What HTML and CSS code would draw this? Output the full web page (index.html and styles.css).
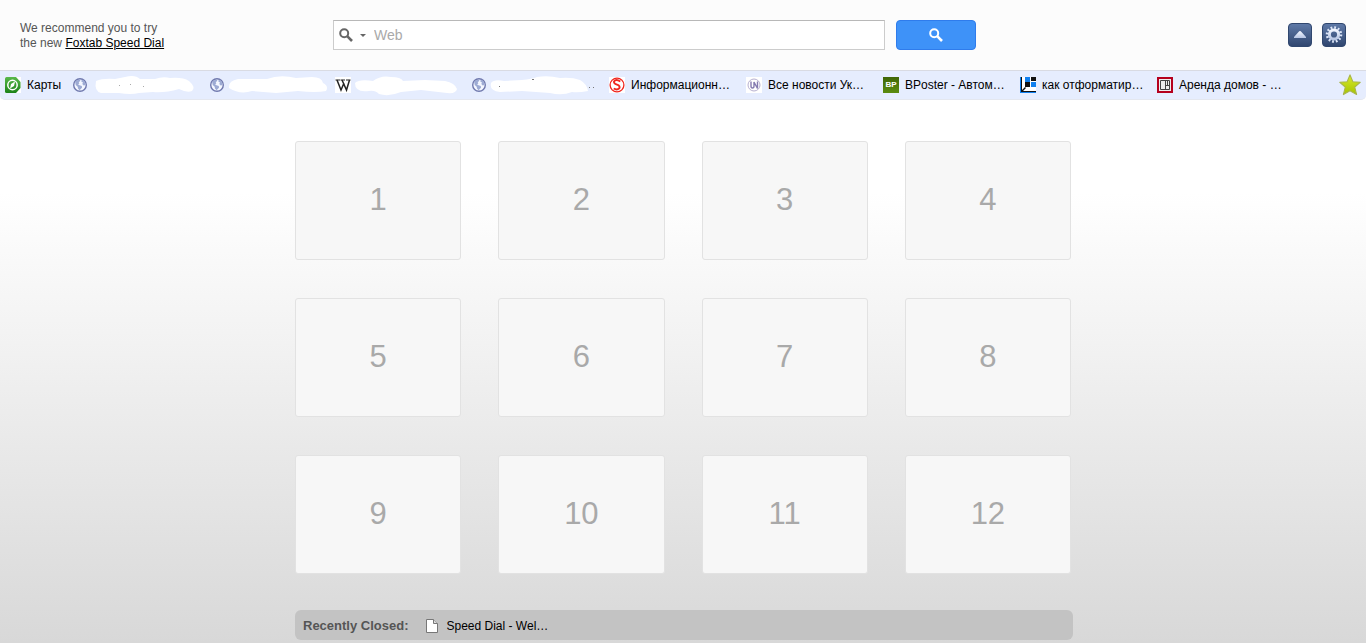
FILE: index.html
```html
<!DOCTYPE html>
<html lang="en">
<head>
<meta charset="utf-8">
<title>Speed Dial</title>
<link rel="stylesheet" href="styles.css">
</head>
<body>
<svg class="defs" aria-hidden="true">
  <defs>
    <linearGradient id="navy" x1="0" y1="0" x2="0" y2="1"><stop offset="0" stop-color="#5f7aa8"/><stop offset="1" stop-color="#2f456e"/></linearGradient>
    <linearGradient id="silver" x1="0" y1="0" x2="0" y2="1"><stop offset="0" stop-color="#f2f6ff"/><stop offset="1" stop-color="#b6c5e4"/></linearGradient>
    <linearGradient id="lime" x1="0" y1="0" x2="0" y2="1"><stop offset="0" stop-color="#d9ea2a"/><stop offset="1" stop-color="#a6c400"/></linearGradient>
    <linearGradient id="green" x1="0" y1="0" x2="0" y2="1"><stop offset="0" stop-color="#58b84a"/><stop offset="1" stop-color="#1c8218"/></linearGradient>
    <linearGradient id="olive" x1="0" y1="0" x2="0" y2="1"><stop offset="0" stop-color="#3f6606"/><stop offset="1" stop-color="#5c8c10"/></linearGradient>
    <symbol id="globe" viewBox="0 0 16 16">
      <circle cx="7" cy="8" r="6.300" fill="#f4f7ff" stroke="#7079ae" stroke-width="1.400"/>
      <path d="M2.200 5 4 3.200 7.500 2.300 7 4.200 5.700 5l.6 1.500-1.300.8 1.500 1 2.300.8.2 1.700-1.600 1.500-.6 1.300-1.800-2.200-.3-1.700-2-1.600zM8.800 2.500l2.700 1.700 1.100 3-1.600 1.600L9.300 7l.7-1.400-1.700-1.100z" fill="#9dabd4"/>
    </symbol>
    <symbol id="lens" viewBox="0 0 14 14">
      <circle cx="5.200" cy="5.200" r="4" fill="none" stroke="currentColor" stroke-width="2"/>
      <path d="m8.200 8.200 4.800 4.800" stroke="currentColor" stroke-width="2.600"/>
    </symbol>
  </defs>
</svg>

<header class="header">
  <p class="promo">We recommend you to try<br>the new <a class="promo-link" href="#">Foxtab Speed Dial</a></p>
  <form class="search">
    <div class="search-box">
      <button class="engine" type="button" aria-label="Choose search engine">
        <svg class="engine-lens"><use href="#lens"/></svg>
        <svg class="engine-arrow" viewBox="0 0 6 3"><path d="M0 0h6L3 3z" fill="#666"/></svg>
      </button>
      <input class="search-input" type="text" placeholder="Web" aria-label="Search the web">
    </div>
    <button class="search-button" type="submit" aria-label="Search"><svg class="search-lens"><use href="#lens"/></svg></button>
  </form>
  <div class="actions">
    <button class="action" type="button" aria-label="Collapse">
      <svg class="action-icon" viewBox="0 0 24 24"><rect x=".5" y=".5" width="23" height="23" rx="3.500" fill="url(#navy)" stroke="#30476f"/><path d="M6 15V14L10.500 9Q12 7.200 13.500 9L18 14V15Z" fill="url(#silver)"/></svg>
    </button>
    <button class="action" type="button" aria-label="Settings">
      <svg class="action-icon" viewBox="0 0 24 24"><rect x=".5" y=".5" width="23" height="23" rx="3.500" fill="url(#navy)" stroke="#30476f"/><circle cx="12" cy="11.500" r="7" fill="none" stroke="#dce5f7" stroke-width="2.600" stroke-dasharray="1.800 1.865"/><circle cx="12" cy="11.500" r="4.600" fill="none" stroke="url(#silver)" stroke-width="3"/></svg>
    </button>
  </div>
</header>

<nav class="bookmarks" aria-label="Bookmarks">
  <a class="bookmark bookmark-short" href="#">
    <svg class="favicon" viewBox="0 0 16 16"><path fill="#fff" d="M0 0h16v16H0z"/><path d="M1.500 0H11l4.500 5v6L11 16H1.500Q0 16 0 14.500v-13Q0 0 1.500 0z" fill="url(#green)"/><circle cx="7.500" cy="8" r="4.700" fill="none" stroke="#fff" stroke-width="1.500"/><path d="M10 4.500 9 9 5 11.500 6 7z" fill="#fff"/></svg>
    <span class="bookmark-title">Карты</span>
  </a>
  <a class="bookmark" href="#" aria-label="Bookmark">
    <svg class="favicon"><use href="#globe"/></svg>
    <svg class="smudge" viewBox="0 0 105 24"><path d="M1 8Q8 5 20 6L30 4Q40 1 45 6L60 6Q68 3 75 5Q88 4 94 8Q101 14 97 18Q92 20 84 16Q70 20 58 19L44 20Q36 22 24 20L6 20Q-1 18 1 8Z" fill="#fff"/><path d="M24 12h1v1h-1zM35 11h1v1h-1zM48 13h1v1h-1z" fill="#aaa"/></svg>
  </a>
  <a class="bookmark bookmark-narrow" href="#" aria-label="Bookmark">
    <svg class="favicon"><use href="#globe"/></svg>
    <svg class="smudge" viewBox="0 0 105 24"><path d="M-3 15Q-4 8 6 6L35 6Q48 1 64 5L80 4Q90 4 91 10Q97 13 94 18Q84 20 66 18L44 20L20 18Q8 22 -3 15Z" fill="#fff"/></svg>
  </a>
  <a class="bookmark" href="#" aria-label="Bookmark">
    <svg class="favicon" viewBox="0 0 16 16"><path d="M0 0h16v16H0z" fill="#fff"/><path d="M.5 3h5M6 3h4M11 3h4.500" stroke="#222"/><path d="m2 3 4 10L9 6M7 3l4.500 10L14.500 3" fill="none" stroke="#222" stroke-width="1.500"/></svg>
    <svg class="smudge" viewBox="0 0 105 24"><path d="M-2 10Q2 6 16 8Q24 2 34 4Q44 4 46 8L68 7L88 8Q98 10 100 16Q99 21 90 20L64 17L44 19Q32 24 22 21Q18 17 12 18Q-2 20 -2 10Z" fill="#fff"/></svg>
  </a>
  <a class="bookmark" href="#" aria-label="Bookmark">
    <svg class="favicon"><use href="#globe"/></svg>
    <svg class="smudge" viewBox="0 0 105 24"><path d="M-3 10Q0 6 10 8L28 7Q38 6 43 4Q54 2 66 5Q78 4 86 7Q93 11 94 18Q84 20 78 19Q68 23 56 20L28 18L6 19Q-5 18 -3 10Z" fill="#fff"/><path d="M5 13h1v1H5zM38 6h2v1h-2zM95 14h1v1h-1zM99 14h1v1h-1z" fill="#777"/></svg>
  </a>
  <a class="bookmark" href="#">
    <svg class="favicon" viewBox="0 0 16 16"><path d="M0 0h16v16H0z" fill="#fff"/><circle cx="8" cy="8" r="6.900" fill="#fff" stroke="#f0271f" stroke-width="1.300"/><path d="M11.300 4.500Q7 1.500 5 4.500Q4.600 6.600 8 7.700Q11.600 9 10.300 11.300Q8 13.500 4.700 11.500" fill="none" stroke="#f0271f" stroke-width="1.900"/></svg>
    <span class="bookmark-title">Информационн…</span>
  </a>
  <a class="bookmark" href="#">
    <svg class="favicon" viewBox="0 0 16 16"><path d="M0 0h16v16H0z" fill="#fff"/><circle cx="8" cy="8" r="6" fill="none" stroke="#b7b0d0"/><path d="M5 4.500V9q0 2 1.500 2T8 9V5l3.500 6.500v-7" fill="none" stroke="#857bb0" stroke-width="1.400"/></svg>
    <span class="bookmark-title">Все новости Ук…</span>
  </a>
  <a class="bookmark" href="#">
    <svg class="favicon" viewBox="0 0 16 16"><path d="M0 0h16v16H0z" fill="url(#olive)"/><text class="favicon-letters" x="8" y="10" text-anchor="middle">BP</text></svg>
    <span class="bookmark-title">BPoster - Автом…</span>
  </a>
  <a class="bookmark" href="#">
    <svg class="favicon" viewBox="0 0 16 16"><path d="M2 0h14v14H2z" fill="#fff"/><path d="M5 0h5v5H5zM11 5h5v5h-5z" fill="#1180ee"/><path d="M11 0h5v4h-5zM5 5h5v5H5z" fill="#111"/><path d="M0 0h1v15h15v1H0z" fill="#1180ee"/><path d="M1 0h1v13l3-3 1 1-3 3h13v1H1z" fill="#111"/></svg>
    <span class="bookmark-title">как отформатир…</span>
  </a>
  <a class="bookmark" href="#">
    <svg class="favicon" viewBox="0 0 16 16"><path d="M0 0h16v16H0z" fill="#b5001d"/><path d="M2 2h12v12H2z" fill="#eee"/><path d="M3.500 3.500h9v9h-9zM8.500 3.500v9M8.500 8.500h4M10.500 3.500v5" fill="none" stroke="#444"/></svg>
    <span class="bookmark-title">Аренда домов - …</span>
  </a>
  <button class="star" type="button" aria-label="Favourites">
    <svg class="star-icon" viewBox="0 0 20 20"><path d="m10 .8 2.600 6.200 6.700.5-5 4.500 1.700 6.700-6-3.500-6 3.500 1.700-6.700-5-4.500 6.700-.5z" fill="url(#lime)" stroke="#a9b64a" stroke-linejoin="round"/></svg>
  </button>
</nav>

<main class="main">
  <div class="dials">
    <button class="dial" type="button">1</button>
    <button class="dial" type="button">2</button>
    <button class="dial" type="button">3</button>
    <button class="dial" type="button">4</button>
    <button class="dial" type="button">5</button>
    <button class="dial" type="button">6</button>
    <button class="dial" type="button">7</button>
    <button class="dial" type="button">8</button>
    <button class="dial" type="button">9</button>
    <button class="dial" type="button">10</button>
    <button class="dial" type="button">11</button>
    <button class="dial" type="button">12</button>
  </div>
  <section class="recent">
    <h2 class="recent-heading">Recently Closed:</h2>
    <a class="recent-link" href="#">
      <svg class="page-icon" viewBox="0 0 12 14"><path d="M.5.500h7l4 4v9H.5z" fill="#fff" stroke="#777"/><path d="M7.500.500v4h4" fill="#ddd" stroke="#777"/></svg>
      <span>Speed Dial - Wel…</span>
    </a>
  </section>
</main>
</body>
</html>
```
FILE: styles.css
```css
* { box-sizing: border-box; }
body {
  margin: 0;
  min-height: 100vh;
  font: 12px/15px "Liberation Sans", Arial, sans-serif;
  color: #000;
  background: linear-gradient(#fff 30%, #d8d8d8) no-repeat;
}
button { padding: 0; border: 0; background: none; font: inherit; cursor: pointer; }
svg { display: block; flex: none; }
a { color: inherit; }
.defs { position: absolute; width: 0; height: 0; }

.header {
  display: grid;
  grid-template-columns: 313px minmax(0, 643px) 1fr;
  align-items: center;
  height: 70px;
  padding: 0 20px;
  background: #fcfcfc;
}
.promo { margin: 0; padding-top: 2px; color: #555; }
.promo-link { color: #000; }
.search { display: flex; gap: 11px; }
.search-box {
  display: flex;
  flex: 1;
  height: 30px;
  border: 1px solid #ccc;
  border-top-color: #b8b8b8;
  background: #fff;
}
.engine { display: flex; align-items: center; gap: 7px; padding: 0 8px 0 5px; color: #666; }
.engine-lens { width: 14px; height: 14px; }
.engine-arrow { width: 6px; height: 3px; }
.search-input {
  flex: 1;
  min-width: 0;
  padding: 0;
  border: 0;
  outline: 0;
  background: none;
  font: 14px "Liberation Sans", Arial, sans-serif;
}
.search-input::placeholder { color: #a9a9a9; opacity: 1; }
.search-button {
  display: flex;
  align-items: center;
  justify-content: center;
  width: 80px;
  height: 30px;
  border: 1px solid #2f7cec;
  border-radius: 4px;
  background: #3e92f8;
  color: #fff;
}
.search-lens { width: 14px; height: 14px; }
.actions { display: flex; justify-content: flex-end; gap: 10px; }
.action-icon { width: 24px; height: 24px; }

.bookmarks {
  display: flex;
  align-items: center;
  gap: 10px;
  height: 30px;
  padding: 0 5px;
  border: solid #d9dbe3;
  border-width: 1px 0;
  border-bottom-color: #e4e7ef;
  border-radius: 0 0 5px 5px;
  background: #e6edfe;
}
.bookmark {
  display: flex;
  align-items: center;
  gap: 6px;
  width: 127px;
  white-space: nowrap;
  text-decoration: none;
}
.bookmark-title { padding-top: 1px; }
.bookmark-short { width: 58px; }
.bookmark-narrow { width: 115px; }
.favicon { width: 16px; height: 16px; }
.favicon-letters { font: bold 8px "Liberation Sans", Arial, sans-serif; fill: #fff; }
.smudge { width: 105px; height: 24px; overflow: visible; }
.star { margin-left: auto; }
.star-icon { width: 22px; height: 22px; }

.main { width: 776px; max-width: 100%; margin: 0 auto; padding: 41px 0 3px; }
.dials {
  display: grid;
  grid-template-columns: repeat(4, 1fr);
  gap: 38px 37px;
}
.dial {
  height: 119px;
  padding-bottom: 2px;
  border: 1px solid #e2e2e2;
  border-radius: 3px;
  background: #f7f7f7;
  color: #a9a9a9;
  font-size: 31px;
  line-height: 36px;
}
.recent {
  display: flex;
  align-items: center;
  gap: 18px;
  height: 30px;
  margin: 36px -2px 0 0;
  padding: 2px 8px 0;
  border-radius: 6px;
  background: #c3c3c3;
}
.recent-heading { margin: 0; font-size: 13px; line-height: 28px; color: #555; }
.recent-link { display: flex; align-items: center; gap: 8px; text-decoration: none; }
.page-icon { width: 12px; height: 14px; }
```
